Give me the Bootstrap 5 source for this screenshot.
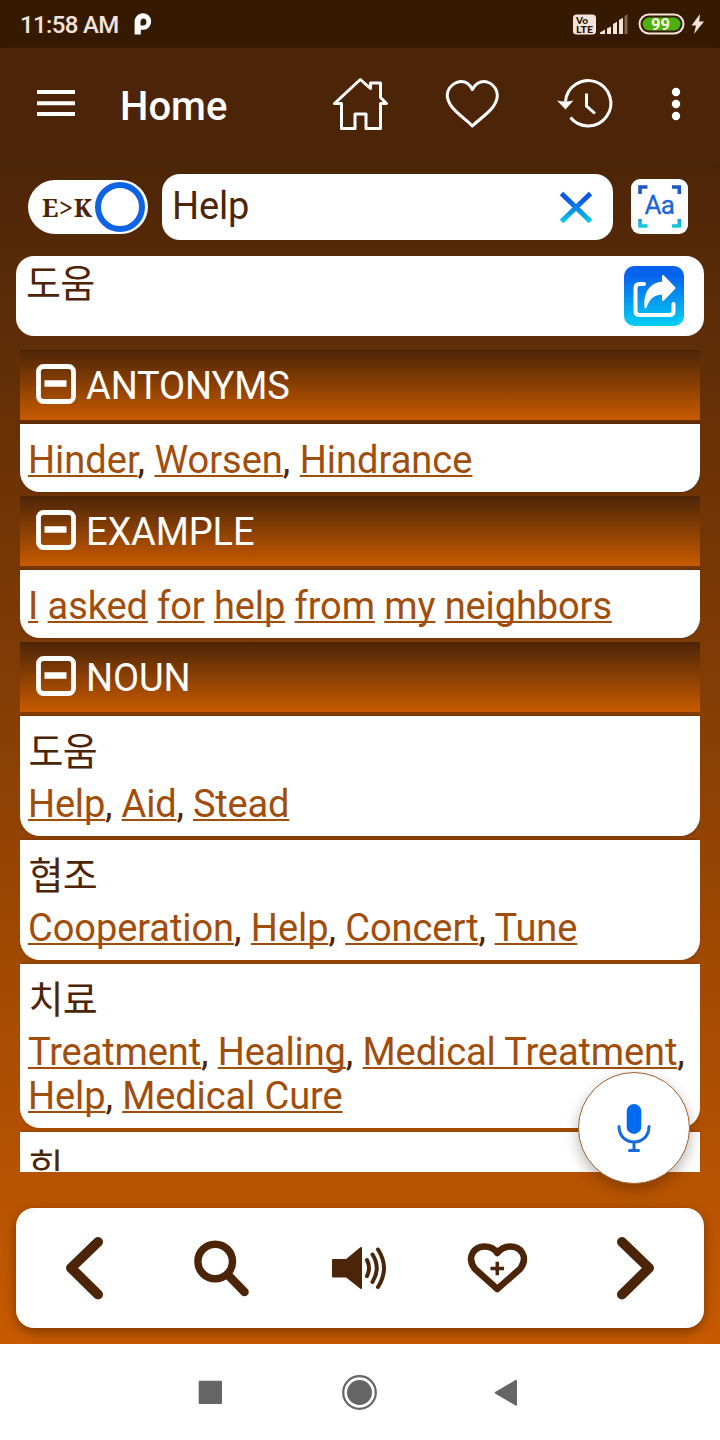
<!DOCTYPE html>
<html lang="en">
<head>
<meta charset="utf-8">
<meta name="viewport" content="width=device-width, initial-scale=1">
<title>Dictionary</title>
<link href="https://cdn.jsdelivr.net/npm/bootstrap@5.3.0/dist/css/bootstrap.min.css" rel="stylesheet">
<style>
:root{--brown:#4c2508;--link:#a14d0c}
body{font-family:Roboto,"Noto Sans CJK KR",sans-serif;color:var(--brown);background:#fff}
.screen{width:720px;height:1440px}
.statusbar{height:48px;background:#361901;color:#f3e3da;padding:0 15px 0 20px}
.clock{font-size:24px;font-weight:500;line-height:50px;width:113px;letter-spacing:-.65px;padding-top:2px}
.toolbar{height:112px;background:#4c2508;color:#fff;box-shadow:0 1px 8px rgba(60,50,20,.5);position:relative}
.toolbar svg{height:112px;flex:none}
.title-text{font-size:40px;font-weight:500;line-height:118px;width:207px;margin-left:45px}
.app-body{height:1184px;background:linear-gradient(#4c2508,#c85a00);padding:14px 16px 16px}
.lang-switch{width:120px;height:54px;background:#fff;border-radius:27px;padding-left:14px;margin-left:12px}
.lang-switch b{font:bold 25px "Noto Serif","Liberation Serif",serif;letter-spacing:.7px;width:53px;white-space:nowrap}
.knob{width:50px;height:50px;border:6px solid #0d63e3;border-radius:50%;flex:none}
.search-box{width:451px;height:66px;border-radius:18px;margin-left:14px;padding:0 20px 0 10px;font-size:38px}
.search-box span{line-height:64px;height:66px;letter-spacing:-.15px}
.scan{width:57px;height:55px;border-radius:9px;margin:0 0 2px 18px}
.result{height:80px;border-radius:18px;margin-top:16px;padding:10px 20px 10px 10px}
.ko{font-size:38px;font-family:"Noto Sans CJK KR",sans-serif;font-weight:400;letter-spacing:-.6px}
.result .ko{line-height:30px}
.entries{height:822px;margin:14px 4px 0;gap:4px;overflow:hidden}
.entries>*{flex:none}
.section-head{height:70px;background:linear-gradient(#4c2508,#c85a00);color:#fff;padding-left:16px;font-size:38px;gap:10px}
.section-head svg{margin-bottom:2px}
.section-head span{padding-top:2px;letter-spacing:-.15px}
.entry{background:#fff;border-radius:0 0 20px 20px;padding:8px 0 10px 8px;font-size:38px;line-height:44px;letter-spacing:-.1px;box-shadow:0 0 3px rgba(0,0,0,.3)}
.entry.only-words{padding-top:14px}
.entry .ko{height:58px;line-height:50px;padding-left:.5px}
.entry a{color:var(--link);text-decoration:underline;text-decoration-thickness:2px;text-underline-offset:1.5px;text-decoration-skip-ink:none}
.actions{height:120px;border-radius:18px;margin-top:36px;box-shadow:0 4px 12px rgba(40,20,0,.45)}
.voice{position:absolute;left:578px;top:1072px;width:112px;height:112px;border:1px solid #a0602f;box-shadow:0 6px 14px rgba(30,20,10,.3)}
.sysnav{height:96px}
</style>
</head>
<body>
<main class="screen position-relative overflow-hidden">
  <header class="statusbar d-flex align-items-center">
    <div class="clock text-nowrap">11:58 AM</div>
    <svg width="20" height="48" viewBox="133 0 20 48"><path fill="#fff" fill-rule="evenodd" d="M134.600 34.500V22a8.300 8.300 0 1 1 8.600 7.800H140.800V34.500ZM140.500 25.500H143a3 3.500 0 1 0-2.500-3Z"/></svg>
    <svg class="ms-auto" width="134" height="48" viewBox="571 0 134 48" fill="#f3e3da">
      <rect x="573" y="14.500" width="23" height="20" rx="3.500"/>
      <g fill="#2c1504" font-family="Lato" font-weight="900"><text x="576" y="23.500" font-size="10">Vo</text><text x="576" y="32.500" font-size="9.500" textLength="17" lengthAdjust="spacingAndGlyphs">LTE</text></g>
      <path d="M600 34v-1.500l5-3V34ZM607 28.500l4-2V34h-4ZM613 24l4-2.200V34h-4ZM619 20l4-2.300V34h-4Z"/><path opacity=".38" d="M624.500 16l3-2V34h-3Z"/>
      <rect x="639.500" y="14.500" width="44" height="19" rx="9.500" fill="#361901" stroke="#f3e3da" stroke-width="2"/>
      <rect x="642.500" y="17.500" width="38" height="13" rx="6.500" fill="#4caf12"/>
      <text x="651" y="29.900" font-size="17" font-weight="700" fill="#f7f7d8" textLength="19" lengthAdjust="spacingAndGlyphs">99</text>
      <path d="M700 14l-8.500 11.500h4.500L694 34l10-12.500h-4.800Z"/>
    </svg>
  </header>

  <nav class="toolbar d-flex">
    <svg width="38" viewBox="37 48 38 112" style="margin-left:37px"><path stroke="#fff" stroke-width="4" d="M37 92h38M37 103.200h38M37 114h38"/></svg>
    <div class="title-text">Home</div>
    <svg width="62" viewBox="327 48 62 112" fill="none" stroke="#fff" stroke-width="3" stroke-linejoin="round"><path d="M334.500 103.500 360.300 79.500 370.500 88.500V83H380.500V97.500L386.500 103.500H380.500V128.500H366V114H355V128.500H341.500V103.500Z"/></svg>
    <svg width="60" viewBox="442 48 60 112" fill="none" stroke="#fff" stroke-width="3" stroke-linejoin="round" style="margin-left:53px"><path d="M472.300 126C466 119.500 458 114.500 452 107C440 91 454 81.500 461 81.500C466 81.500 470 84.500 472.300 89.500C475 84.500 479 81.500 484 81.500C491 81.500 504 91 493 107C487 114.500 479 119.500 472.300 126Z"/></svg>
    <svg width="60" viewBox="555 48 60 112" fill="none" stroke="#fff" stroke-width="3" style="margin-left:53px"><path d="M565.500 101.500A22.700 22.700 0 1 1 570.500 117.500M586.500 93.500V106L595 113.500"/><path fill="#fff" stroke="none" d="M557 100.500Q565 102.500 573.500 100.500L565.500 109.500Z"/></svg>
    <svg width="10" viewBox="671 48 10 112" fill="#fff" style="margin-left:56px"><circle cx="676" cy="92" r="4.200"/><circle cx="676" cy="104" r="4.200"/><circle cx="676" cy="116" r="4.200"/></svg>
  </nav>

  <section class="app-body">
    <div class="d-flex align-items-center">
      <div class="lang-switch d-flex align-items-center"><b>E&gt;K</b><span class="knob"></span></div>
      <div class="search-box bg-white d-flex align-items-center justify-content-between"><span>Help</span>
        <svg width="34" height="34" viewBox="559 190 34 34"><defs><linearGradient id="blue" gradientUnits="userSpaceOnUse" x1="0" y1="194" x2="0" y2="222"><stop offset=".2" stop-color="#0b59e4"/><stop offset="1" stop-color="#08cbe8"/></linearGradient></defs><path stroke="url(#blue)" stroke-width="5" d="M561.500 193.500 590.500 221.500M590.500 193.500 561.500 221.500"/></svg>
      </div>
      <svg class="scan bg-white" viewBox="631 179 57 55"><defs><linearGradient id="scanBlue" gradientUnits="userSpaceOnUse" x1="0" y1="185" x2="0" y2="228"><stop offset=".15" stop-color="#1c57c8"/><stop offset=".65" stop-color="#1a75df"/><stop offset="1" stop-color="#12d4dc"/></linearGradient></defs><path fill="none" stroke="url(#scanBlue)" stroke-width="3.600" d="M640 194V187H647.500M672 187H679.300V194M640 219V226H647.500M672 226H679.300V219"/><text x="644.500" y="213.700" font-size="26" fill="#1d64d8" stroke="#1d64d8" stroke-width=".3" textLength="30.500">Aa</text></svg>
    </div>

    <div class="result bg-white d-flex justify-content-between">
      <div class="ko">도움</div>
      <svg width="60" height="60" viewBox="624 266 60 60"><defs><linearGradient id="shareBlue" x2="0" y2="1"><stop offset=".15" stop-color="#0762ee"/><stop offset="1" stop-color="#04d0f4"/></linearGradient></defs><rect x="624" y="266" width="60" height="60" rx="10" fill="url(#shareBlue)"/><path fill="none" stroke="#fff" stroke-width="4" stroke-linecap="round" d="M644 284H639.500Q635.500 284 635.500 288V311Q635.500 315 639.500 315H669.500Q673.500 315 673.500 311V304"/><path fill="#fff" stroke="#fff" stroke-width="2" stroke-linejoin="round" d="M663 282V282.500C650 283 644 294 645.500 307.500C648.500 299 653 293.500 663 293.500V300L674.500 288 663 276Z"/></svg>
    </div>

    <div class="entries d-flex flex-column">
      <div class="section-head d-flex align-items-center"><svg width="40" height="40" viewBox="0 0 40 40"><rect x="2.500" y="2.500" width="35" height="35" rx="5" fill="none" stroke="#fff" stroke-width="4.800"/><path stroke="#fff" stroke-width="6.500" d="M8.500 19.500h22"/></svg><span>ANTONYMS</span></div>
      <div class="entry only-words" style="letter-spacing:0"><a href="#">Hinder</a>, <a href="#">Worsen</a>, <a href="#">Hindrance</a></div>
      <div class="section-head d-flex align-items-center"><svg width="40" height="40" viewBox="0 0 40 40"><rect x="2.500" y="2.500" width="35" height="35" rx="5" fill="none" stroke="#fff" stroke-width="4.800"/><path stroke="#fff" stroke-width="6.500" d="M8.500 19.500h22"/></svg><span>EXAMPLE</span></div>
      <div class="entry only-words"><a href="#">I</a> <a href="#">asked</a> <a href="#">for</a> <a href="#">help</a> <a href="#">from</a> <a href="#">my</a> <a href="#">neighbors</a></div>
      <div class="section-head d-flex align-items-center"><svg width="40" height="40" viewBox="0 0 40 40"><rect x="2.500" y="2.500" width="35" height="35" rx="5" fill="none" stroke="#fff" stroke-width="4.800"/><path stroke="#fff" stroke-width="6.500" d="M8.500 19.500h22"/></svg><span>NOUN</span></div>
      <div class="entry" style="letter-spacing:-.2px"><div class="ko">도움</div><a href="#">Help</a>, <a href="#">Aid</a>, <a href="#">Stead</a></div>
      <div class="entry" style="letter-spacing:-.06px"><div class="ko">협조</div><a href="#">Cooperation</a>, <a href="#">Help</a>, <a href="#">Concert</a>, <a href="#">Tune</a></div>
      <div class="entry"><div class="ko">치료</div><a href="#">Treatment</a>, <a href="#">Healing</a>, <a href="#">Medical Treatment</a>,<br><a href="#">Help</a>, <a href="#">Medical Cure</a></div>
      <div class="entry"><div class="ko">힘</div></div>
    </div>

    <div class="actions bg-white">
      <svg class="d-block" width="688" height="120" viewBox="16 1208 688 120" fill="none" stroke="#4c2508" stroke-linecap="round" stroke-linejoin="round">
        <path stroke-width="10" d="M98 1242 71 1268 98 1294.500M622 1242 649 1268 622 1294.500"/>
        <circle cx="215.200" cy="1261.500" r="17.300" stroke-width="7.500"/><path stroke-width="8.500" d="M229 1276 244.500 1292"/>
        <path fill="#4c2508" stroke-width="2" d="M333 1260H346.500L361 1248V1288L346.500 1276.500H333Z"/>
        <path stroke-width="4" d="M367 1260Q371 1268 367 1276M372.500 1254.500Q381 1268 372.500 1282M378 1249.500Q390 1268 378 1287"/>
        <path stroke-width="6.500" d="M497.300 1289 474.500 1268.500C466 1256 475 1246.500 484.500 1246.500C491 1246.500 495 1249.500 497.300 1253C500 1249.500 504 1246.500 510.500 1246.500C520 1246.500 529 1256 520.500 1268.500Z"/>
        <path stroke-width="3.500" stroke-linecap="butt" d="M490.500 1268.500h13.500M497.300 1261.800v13.500"/>
      </svg>
    </div>
  </section>

  <button class="voice btn bg-white rounded-circle p-0" aria-label="Voice search">
    <svg width="110" height="110" viewBox="579 1073 110 110"><rect x="626.700" y="1104" width="14.600" height="30" rx="7.300" fill="#006af0"/><path fill="none" stroke="#1769dc" stroke-width="3" stroke-linecap="round" d="M619 1126.500C619 1147 649 1147 649 1126.500M634 1142V1150.500M629.500 1150.500H638.500"/></svg>
  </button>

  <footer class="sysnav bg-white">
    <svg class="d-block" width="720" height="96" viewBox="0 1344 720 96" fill="#656565"><rect x="198.700" y="1380.700" width="23.300" height="23.300" rx="1"/><circle cx="359.500" cy="1392.500" r="12.500"/><circle cx="359.500" cy="1392.500" r="16.300" fill="none" stroke="#656565" stroke-width="2.200"/><path d="M495.500 1391.700 515.500 1380Q517 1379.500 517 1381V1404.500Q517 1406 515.500 1405.500L495.500 1393.700Q494 1392.700 495.500 1391.700Z"/></svg>
  </footer>
</main>
<script src="https://cdn.jsdelivr.net/npm/bootstrap@5.3.0/dist/js/bootstrap.bundle.min.js"></script>
</body>
</html>
